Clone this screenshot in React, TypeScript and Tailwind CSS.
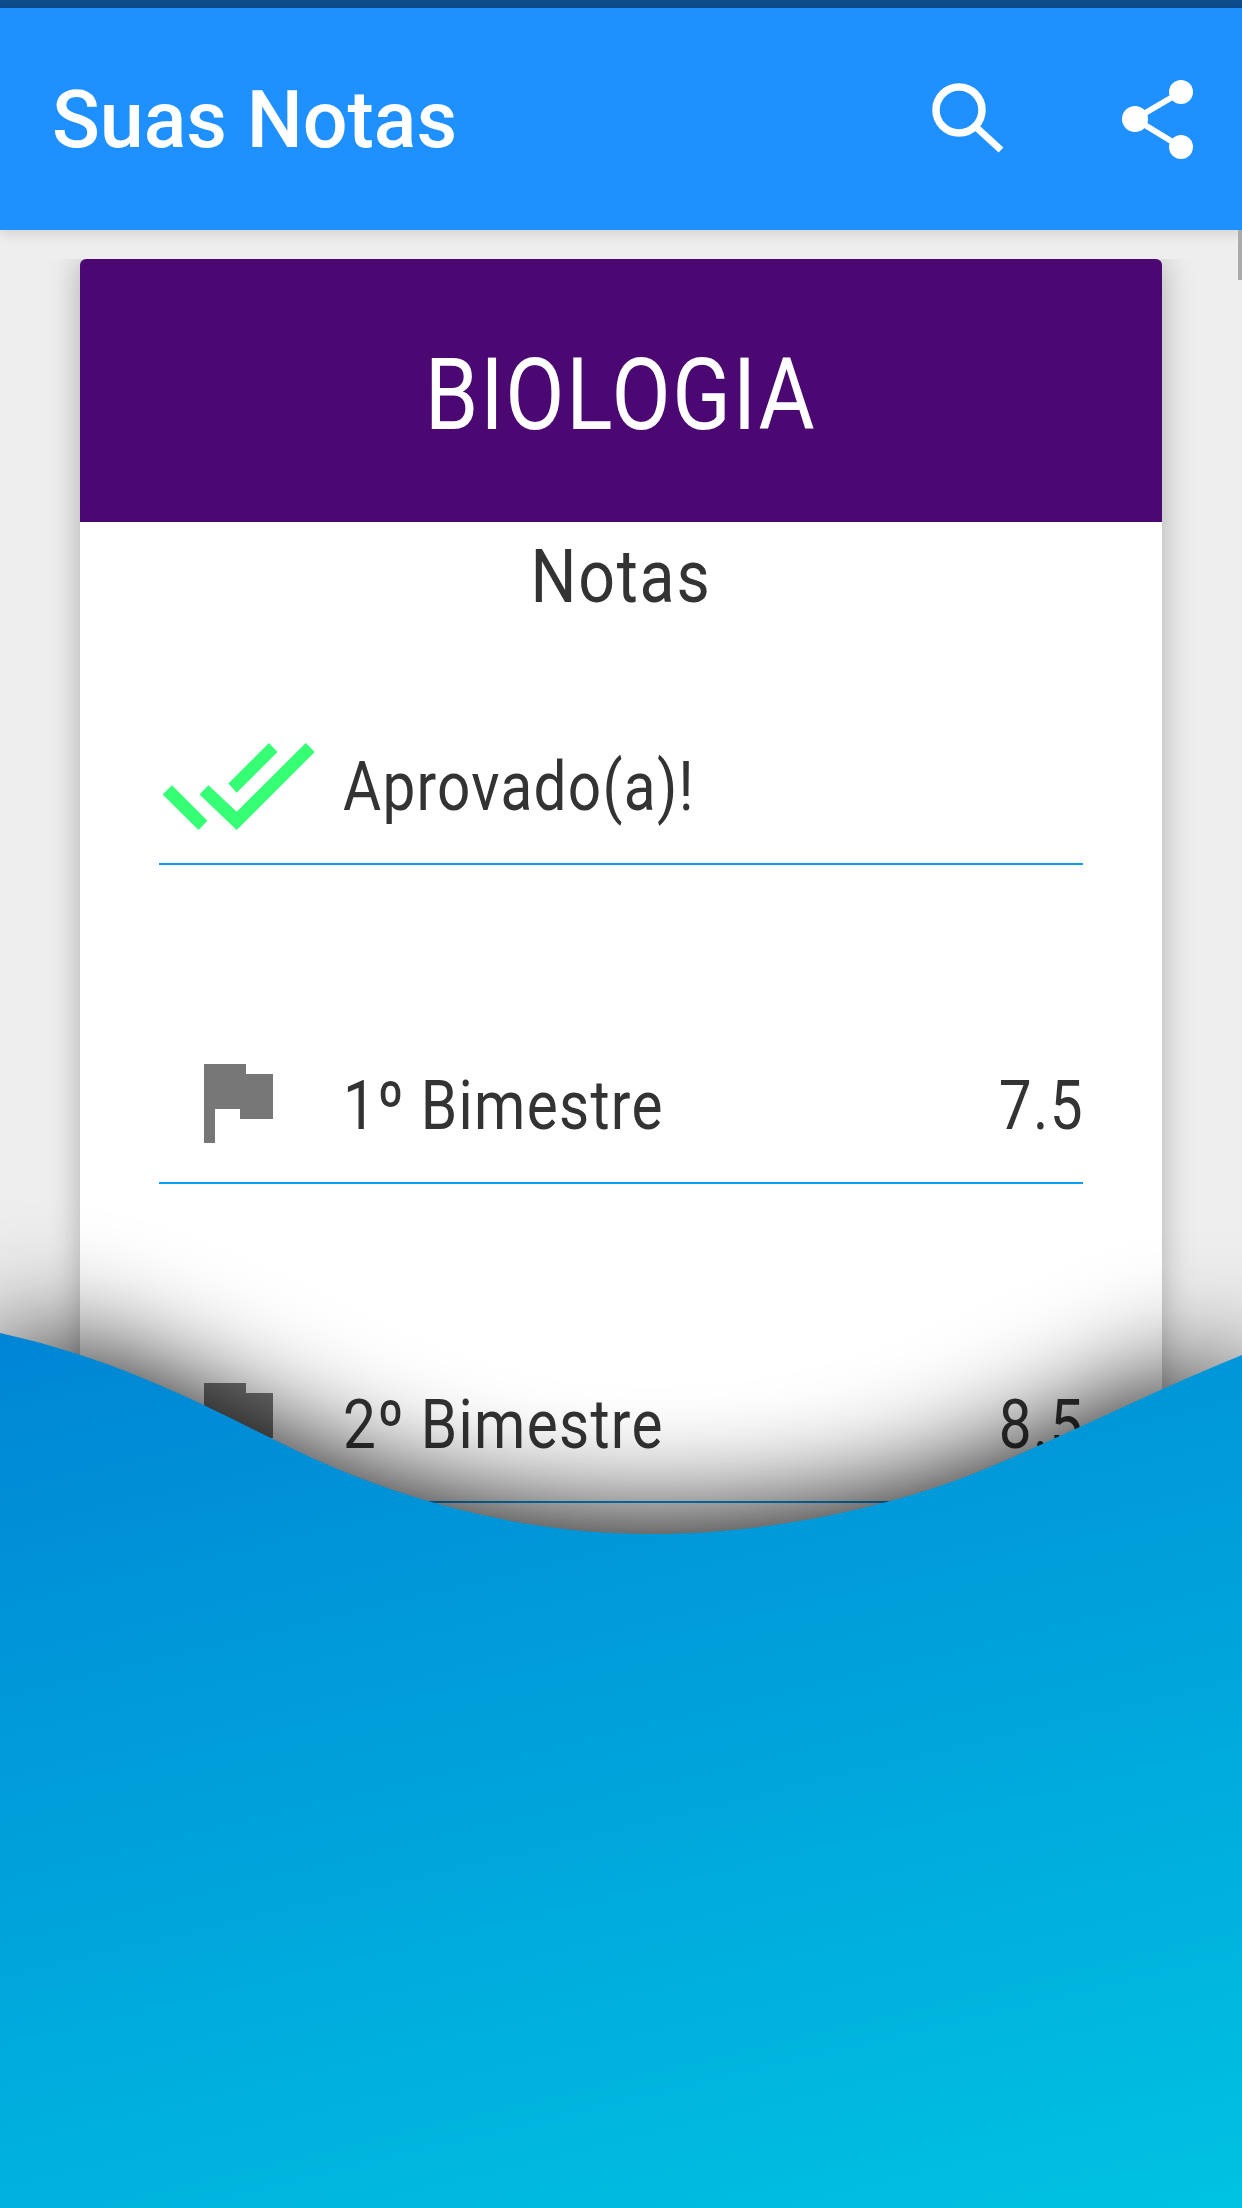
const WAVE =
  "M0 1333 C150 1366 245 1430 333 1467 C420 1504 530 1534 650 1534 C775 1534 900 1505 990 1467 C1075 1431 1160 1388 1242 1355 L1242 2208 L0 2208 Z";

/* ---------- Icons ---------- */
function SearchIcon() {
  return (
    <svg width="72" height="72" viewBox="0 0 72 72" fill="none" stroke="#fff">
      <circle cx="27" cy="27" r="23" strokeWidth="7.5" />
      <path d="M45 45 L69 67" strokeWidth="7" />
    </svg>
  );
}

function ShareIcon() {
  return (
    <svg width="72" height="80" viewBox="0 0 72 80" fill="#fff" stroke="none">
      <circle cx="59" cy="13" r="12" />
      <circle cx="13" cy="40" r="13" />
      <circle cx="59" cy="68" r="12" />
      <path d="M13 40 L59 13 M13 40 L59 68" stroke="#fff" strokeWidth="6" />
    </svg>
  );
}

function DoubleCheck() {
  return (
    <svg width="153" height="87" viewBox="186 123 459 262" fill="#36ff75">
      <polygon points="215,250 187,278 295,385 322,357" />
      <polygon points="325,250 298,278 410,385 645,150 618,123 410,330" />
      <polygon points="507,123 385,245 410,273 533,150" />
    </svg>
  );
}

function Flag() {
  return (
    <svg width="69" height="79" viewBox="104 363 69 79" fill="#777777" className="mb-[4px]">
      <path d="M104 363 H146 V373 H173 V418 H140 V408 H115 V442 H104 Z" />
    </svg>
  );
}

/* ---------- Rows ---------- */
function Row({ icon, label, value }: { icon: React.ReactNode; label: string; value?: string }) {
  return (
    <div className="flex items-center h-[319px] pt-[163px] border-b-2 border-[#0aa0f5] box-border">
      <div className="w-[184px] h-[110px] flex items-center justify-center pr-[25px]">{icon}</div>
      <span className="origin-left scale-x-[0.86] tracking-[1.5px] whitespace-nowrap pt-[2px]">{label}</span>
      {value && <span className="ml-auto origin-right scale-x-[0.86] tracking-[1.5px] -mr-[1px] pt-[2px]">{value}</span>}
    </div>
  );
}

export default function App() {
  return (
    <div
      className="relative w-[1242px] h-[2208px] overflow-hidden bg-[#eeeeee]"
      style={{ fontFamily: "Roboto, sans-serif" }}
    >
      <div className="h-2 bg-[#0f4c8c]" />
      <header className="relative z-10 h-[222px] bg-[#1e90ff] shadow-[0_4px_12px_rgba(0,0,0,0.12)] flex items-center pl-[52px] pr-[48px]">
        <h1 className="text-white text-[79px] font-medium leading-none pt-[3px]">Suas Notas</h1>
        <div className="ml-auto flex items-center gap-[118px]">
          <SearchIcon />
          <ShareIcon />
        </div>
      </header>

      <div className="absolute right-0 top-[230px] w-1 h-[50px] bg-[#aaaaaa] z-10" />

      <main className="pt-[29px] px-[80px]">
        <div className="bg-white rounded-t-md shadow-[0_0_32px_rgba(0,0,0,0.28)] [clip-path:inset(0_-60px_-60px_-60px)] h-[1400px] text-[#333333]">
          <div className="h-[263px] bg-[#4b0772] rounded-t-md flex items-center justify-center">
            <span className="text-white text-[100px] leading-none scale-x-[0.86] tracking-[2px] pt-[8px]">BIOLOGIA</span>
          </div>
          <div className="px-[79px]">
            <div className="text-center text-[75px] leading-none pt-[17px] h-[22px] scale-x-[0.86] tracking-[2px]">Notas</div>
            <div className="text-[68px] leading-none">
              <div className="h-[2px]" />
              <Row icon={<DoubleCheck />} label="Aprovado(a)!" />
              <Row icon={<Flag />} label="1º Bimestre" value="7.5" />
              <Row icon={<Flag />} label="2º Bimestre" value="8.5" />
            </div>
          </div>
        </div>
      </main>

      {/* wave with its soft shadow */}
      <svg className="absolute inset-0 z-20" width="1242" height="2208" viewBox="0 0 1242 2208">
        <defs>
          <linearGradient id="wave" gradientUnits="userSpaceOnUse" x1="0" y1="1335" x2="274" y2="2472">
            <stop offset="0" stopColor="#0085d5" />
            <stop offset="1" stopColor="#00c4e2" />
          </linearGradient>
          <filter id="soft" filterUnits="userSpaceOnUse" x="-300" y="900" width="1842" height="1600">
            <feGaussianBlur stdDeviation="60" />
          </filter>
        </defs>
        <path d={WAVE} fill="#000" filter="url(#soft)" />
        <ellipse cx="650" cy="1590" rx="320" ry="80" fill="#000" opacity="0.18" filter="url(#soft)" />
        <path d={WAVE} fill="url(#wave)" />
      </svg>
    </div>
  );
}
